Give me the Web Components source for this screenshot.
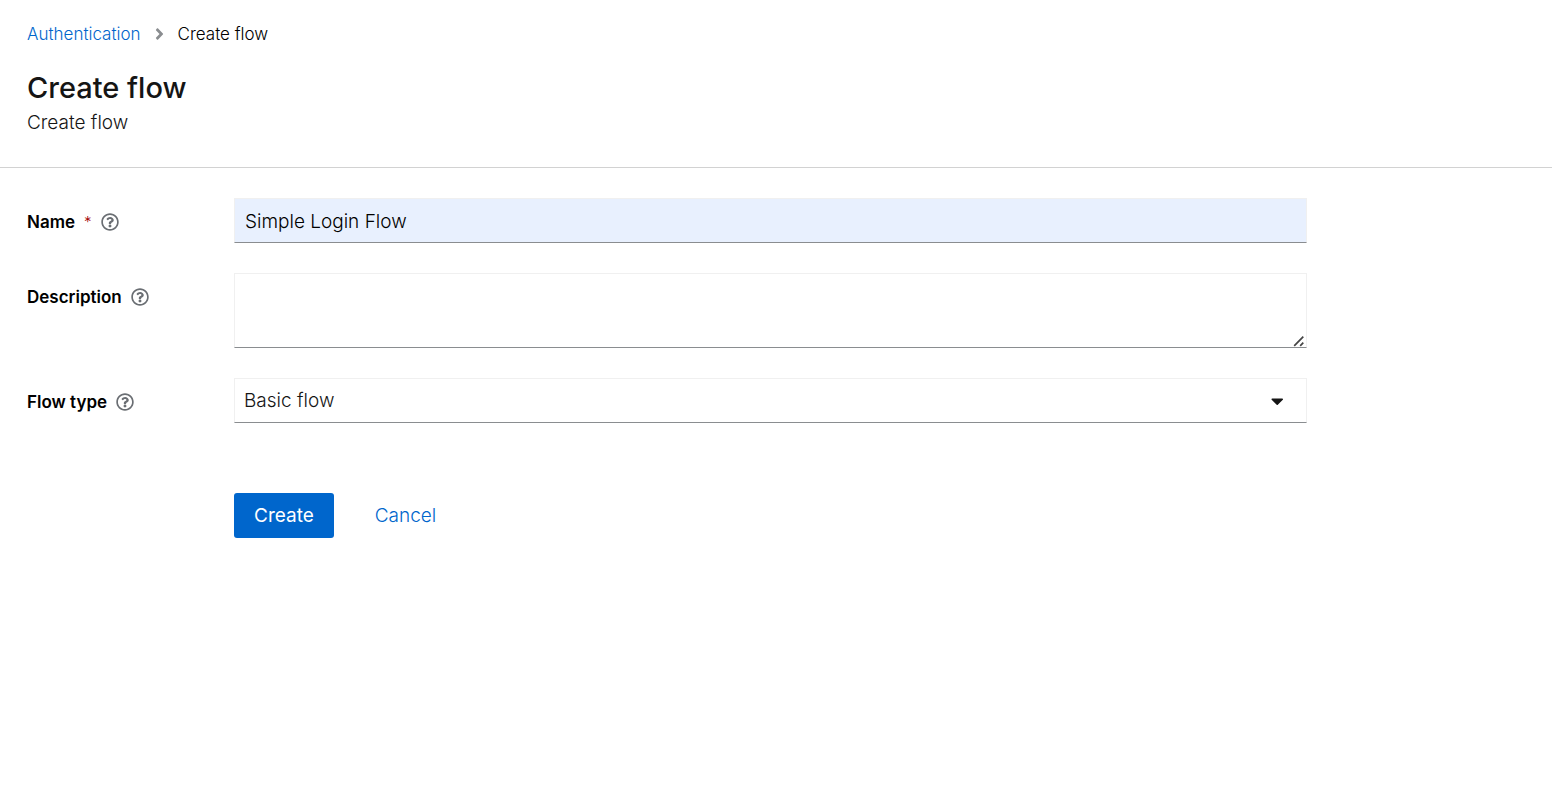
<!DOCTYPE html>
<html lang="en">
<head>
<meta charset="utf-8">
<meta name="viewport" content="width=device-width, initial-scale=1">
<title>Create flow</title>
<style>
  body {
    margin: 0;
    background: #fff;
    color: #151515;
    font-family: "Inter", "Noto Sans", sans-serif;
    font-size: 19px;
    font-weight: 300;
    line-height: 31px;
    --link: #0066cc;
    --edge: #f0f0f0;
    --underline: #8a8d90;
    --muted: #6a6e73;
    --gutter: 27px;
  }
</style>
</head>
<body>
<flow-page></flow-page>

<script>
const define = (name, html) => customElements.define(name, class extends HTMLElement {
  connectedCallback() {
    if (this.shadowRoot) return;
    this.attachShadow({ mode: 'open' }).innerHTML =
      typeof html === 'function' ? html(this) : html;
  }
});

const ICONS = {
  help: ['0 0 512 512', 'M256 8C119.043 8 8 119.083 8 256c0 136.997 111.043 248 248 248s248-111.003 248-248C504 119.083 392.957 8 256 8zm0 448c-110.532 0-200-89.431-200-200 0-110.495 89.472-200 200-200 110.491 0 200 89.471 200 200 0 110.53-89.431 200-200 200zm107.244-255.2c0 67.052-72.421 68.084-72.421 92.863V300c0 6.627-5.373 12-12 12h-45.647c-6.627 0-12-5.373-12-12v-8.659c0-35.745 27.1-50.034 47.579-61.516 17.561-9.845 28.324-16.541 28.324-29.579 0-17.246-21.999-28.693-39.784-28.693-23.189 0-33.894 10.977-48.942 29.969-4.057 5.12-11.46 6.071-16.666 2.124l-27.824-21.098c-5.107-3.872-6.251-11.066-2.644-16.363C184.846 131.491 214.94 112 261.794 112c49.071 0 101.45 38.304 101.45 88.8zM298 368c0 23.159-18.841 42-42 42s-42-18.841-42-42 18.841-42 42-42 42 18.841 42 42z'],
  angle: ['0 0 256 512', 'M224.3 273l-136 136c-9.4 9.4-24.6 9.4-33.9 0l-22.6-22.6c-9.4-9.4-9.4-24.6 0-33.9l96.4-96.4-96.4-96.4c-9.4-9.4-9.4-24.6 0-33.9L54.3 103c9.4-9.4 24.6-9.4 33.9 0l136 136c9.5 9.4 9.5 24.6.1 34z'],
  caret: ['0 0 320 512', 'M31.3 192h257.3c17.8 0 26.7 21.5 14.1 34.1L174.1 354.8c-7.8 7.8-20.5 7.8-28.3 0L17.2 226.1C4.6 213.5 13.4 192 31.3 192z'],
  grip: ['0 0 12 12', 'M.6 10.2 9.7 1.1l1.2 1.2-9.1 9.1zM6.6 10.2l3.1-3.1 1.2 1.2-3.1 3.1z']
};

define('ui-icon', el => {
  const [box, path] = ICONS[el.getAttribute('name')];
  return `<style>
    :host { display: inline-flex; flex: none; }
    svg { display: block; height: var(--icon-size, 18px); fill: currentColor; }
  </style>
  <svg viewBox="${box}" aria-hidden="true"><path d="${path}"/></svg>`;
});

define('crumb-trail', `<style>
    :host { display: block; font-size: 17px; line-height: 28px; color: #000; }
    nav { display: flex; align-items: center; gap: 14px; }
    a { color: var(--link); text-decoration: none; }
    ui-icon { --icon-size: 18px; color: var(--underline); }
  </style>
  <nav aria-label="Breadcrumb">
    <a href="#authentication">Authentication</a>
    <ui-icon name="angle"></ui-icon>
    <span aria-current="page"><slot></slot></span>
  </nav>`);

define('page-header', `<style>
    :host { display: block; padding: 20px var(--gutter) 29px; border-bottom: 1px solid #d2d2d2; }
    h1 { margin: 20px 0 0; font-size: 29px; line-height: 39px; font-weight: 500; }
    p { margin: 0; }
  </style>
  <slot name="crumbs"></slot>
  <h1><slot name="title"></slot></h1>
  <p><slot></slot></p>`);

const control = el => {
  const value = el.getAttribute('value') || '';
  switch (el.getAttribute('kind')) {
    case 'textarea': return `<div class="stack area">
      <textarea id="control"></textarea>
      <ui-icon name="grip"></ui-icon></div>`;
    case 'select': return `<div class="stack select">
      <select id="control"><option>${value}</option><option>Client flow</option></select>
      <ui-icon name="caret"></ui-icon></div>`;
    default: return `<input id="control" type="text" required value="${value}">`;
  }
};

define('form-field', el => `<style>
    :host { display: grid; grid-template-columns: 187px minmax(0, 1fr); column-gap: 20px; }
    .label { display: flex; align-items: center; align-self: start; gap: 9px; padding-top: 10px; line-height: 28px; }
    label { font-size: 17px; font-weight: 600; color: #000; }
    .required { color: #a30000; font-size: 15px; }
    button { display: flex; padding: 0; border: 0; background: none; color: var(--muted); }
    input, textarea, select {
      display: block; box-sizing: border-box; width: 100%; height: 45px; margin: 0; padding: 0 10px;
      border: 1px solid var(--edge); border-bottom-color: var(--underline); border-radius: 0;
      background: #fff; color: #151515; font: inherit; appearance: none; outline: 0;
    }
    input { padding-top: 1px; background: #e8f0fe; color: #000; }
    textarea { height: 75px; padding: 6px 10px; resize: vertical; }
    textarea::-webkit-resizer { background: transparent; }
    select { padding: 0 50px 0 9px; }
    .stack { display: grid; }
    .stack > * { grid-area: 1 / 1; }
    .stack ui-icon { justify-self: end; pointer-events: none; color: #151515; }
    .select ui-icon { --icon-size: 20px; align-self: center; margin-right: 24px; }
    .area ui-icon { --icon-size: 12px; align-self: end; margin: 0 2px 1px; color: #444; }
  </style>
  <div class="label">
    <label for="control">${el.getAttribute('label')}</label>
    ${el.hasAttribute('required') ? '<span class="required" aria-hidden="true">*</span>' : ''}
    <button type="button" aria-label="Help for ${el.getAttribute('label')}"><ui-icon name="help"></ui-icon></button>
  </div>
  ${control(el)}`);

define('action-button', `<style>
    :host { display: block; }
    button { display: block; height: 45px; padding: 0 20px; border: 0; border-radius: 3px; background: none; color: var(--link); font: inherit; }
    :host([primary]) button { background: #0066cc; color: #fff; font-weight: 400; }
  </style>
  <button type="button"><slot></slot></button>`);

define('flow-form', `<style>
    :host { display: block; padding: 30px var(--gutter); }
    form { display: grid; gap: 30px; max-width: 1280px; }
    .actions { display: flex; gap: 21px; padding-top: 40px; margin-left: 207px; }
  </style>
  <form>
    <form-field label="Name" required value="Simple Login Flow"></form-field>
    <form-field label="Description" kind="textarea"></form-field>
    <form-field label="Flow type" kind="select" value="Basic flow"></form-field>
    <div class="actions">
      <action-button primary>Create</action-button>
      <action-button>Cancel</action-button>
    </div>
  </form>`);

define('flow-page', `<style>
    :host { display: block; }
  </style>
  <page-header>
    <crumb-trail slot="crumbs">Create flow</crumb-trail>
    <span slot="title">Create flow</span>
    Create flow
  </page-header>
  <main><flow-form></flow-form></main>`);
</script>
</body>
</html>
